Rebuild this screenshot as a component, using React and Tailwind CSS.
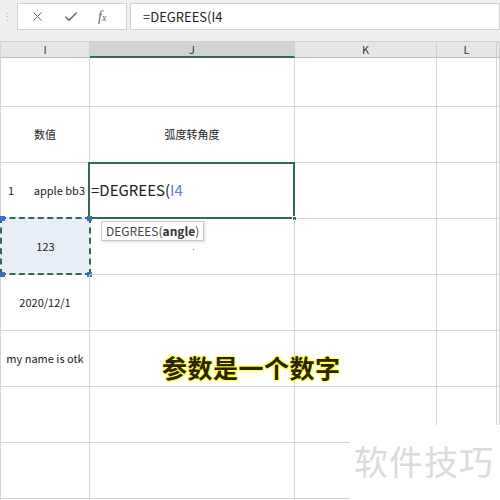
import { X, Check } from 'lucide-react';

const font = { fontFamily: '"Noto Sans CJK SC", "Noto Sans", sans-serif' };

const cols = [
  { key: 'I', w: 'w-[89px]' },
  { key: 'J', w: 'w-[205px]' },
  { key: 'K', w: 'w-[142px]' },
  { key: 'L', w: 'w-[60px]' },
  { key: 'M', w: 'flex-1' },
];

function Cell({ w, h, children, className = '' }) {
  return (
    <div className={`${w} ${h} shrink-0 border-r border-b border-[#d4d4d4] ${className}`}>
      {children}
    </div>
  );
}

function Row({ h, cells = {} }) {
  return (
    <div className="flex">
      {cols.map((c) => (
        <Cell key={c.key} w={c.w} h={h} className="relative flex items-center justify-center">
          {cells[c.key]}
        </Cell>
      ))}
    </div>
  );
}

function Handle({ className }) {
  return <div className={`absolute h-[5px] w-[5px] bg-[#3b6fc1] ${className}`} />;
}

export default function App() {
  return (
    <div className="relative h-[500px] w-[500px] overflow-hidden bg-white text-[11px] text-[#222]" style={font}>
      {/* formula bar */}
      <div className="flex h-[41px] items-start gap-[3px] bg-[#efefef] pt-[3px]">
        <div className="flex h-[27px] w-[14px] items-center justify-center text-[#b5b5b5]">⋮</div>
        <div className="flex h-[27px] w-[110px] items-center border border-[#d0d0d0] bg-white">
          <X size={15} strokeWidth={1.6} className="ml-[12px] text-[#626262]" />
          <Check size={16} strokeWidth={2} className="ml-[18px] text-[#626262]" />
          <span className="ml-[19px] italic text-[14px] text-[#626262]" style={{ fontFamily: '"Liberation Serif", serif' }}>
            f<span className="text-[10px]">x</span>
          </span>
        </div>
        <div className="flex h-[27px] flex-1 items-center border border-[#d0d0d0] bg-white pl-[12px] text-[13px] text-[#222]">
          =DEGREES(I4
        </div>
      </div>

      {/* sheet */}
      <div className="border-l border-[#d4d4d4]">
        {/* column header */}
        <div className="flex border-t border-[#d0d0d0] bg-[#e6e6e6]">
          {cols.map((c) => (
            <div
              key={c.key}
              className={`${c.w} h-[16px] shrink-0 border-r border-[#cfcfcf] flex items-center justify-center text-[11px] text-[#333] ${
                c.key === 'J' ? 'bg-[#d2d2d2] border-b-2 border-b-[#2d6a4f]' : 'border-b border-b-[#bdbdbd]'
              }`}
            >
              {c.key === 'M' ? '' : c.key}
            </div>
          ))}
        </div>

        <Row h="h-[49px]" />
        <Row h="h-[56px]" cells={{ I: <span>数值</span>, J: <span>弧度转角度</span> }} />

        {/* active row */}
        <div className="flex">
          <Cell w="w-[89px]" h="h-[56px]" className="flex items-center justify-between pl-[7px] pr-[4px]">
            <span>1</span>
            <span>apple bb3</span>
          </Cell>
          <Cell w="w-[205px]" h="h-[56px]" className="relative">
            <div className="absolute -left-[2px] -top-[1px] flex h-[57px] w-[207px] items-center border-2 border-[#2d6a4f] pl-[1px] text-[15px]">
              <span className="text-[#222]">=DEGREES(</span>
              <span className="text-[#5a80c4]">I4</span>
            </div>
            <div className="absolute -bottom-[3px] -right-[3px] h-[5px] w-[5px] border border-white bg-[#2d6a4f]" />
          </Cell>
          <Cell w="w-[142px]" h="h-[56px]" />
          <Cell w="w-[60px]" h="h-[56px]" />
          <Cell w="flex-1" h="h-[56px]" />
        </div>

        {/* copied row */}
        <div className="flex">
          <Cell w="w-[89px]" h="h-[56px]" className="relative">
            <div className="absolute -left-px -top-[2px] flex h-[58px] w-[91px] items-center justify-center border-2 border-dashed border-[#2d6a4f] bg-[#e8eef7]">
              123
            </div>
            <Handle className="-left-px -top-[3px]" />
            <Handle className="-right-[3px] -top-[3px]" />
            <Handle className="-left-px -bottom-[3px]" />
            <Handle className="-right-[3px] -bottom-[3px]" />
          </Cell>
          <Cell w="w-[205px]" h="h-[56px]" className="relative">
            <div className="absolute left-[11px] top-[2px] border border-[#c8c8c8] bg-white px-[4px] py-px text-[12px] leading-[16px] text-[#444] shadow-[1px_1px_2px_rgba(0,0,0,0.15)]">
              DEGREES(<b className="text-[#333]">angle</b>)
            </div>
            <div className="absolute left-[103px] top-[30px] h-px w-px bg-[#777]" />
          </Cell>
          <Cell w="w-[142px]" h="h-[56px]" />
          <Cell w="w-[60px]" h="h-[56px]" />
          <Cell w="flex-1" h="h-[56px]" />
        </div>

        <Row h="h-[56px]" cells={{ I: <span>2020/12/1</span> }} />
        <Row h="h-[56px]" cells={{ I: <span className="whitespace-nowrap">my name is otk</span> }} />
        <Row h="h-[56px]" />
        <Row h="h-[56px]" />
        <Row h="h-[56px]" />
      </div>

      {/* caption */}
      <div
        className="absolute left-[162px] top-[352px] text-[25px] font-bold leading-[30px] tracking-[0.5px] text-[#2a2500]"
        style={{ textShadow: '0 0 2px #ffff33, 0 0 2px #ffff33, 0 0 3px #ffff33, 0 0 3px #ffff33' }}
      >
        参数是一个数字
      </div>

      {/* watermark */}
      <div className="absolute left-[350px] top-[425px] flex h-[75px] w-[150px] items-start bg-white pl-[4px] pt-[16px] text-[34px] leading-[40px] tracking-[1px] text-[#dadada]">
        软件技巧
      </div>
    </div>
  );
}
